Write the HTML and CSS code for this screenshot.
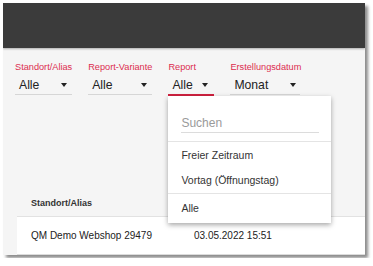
FILE: index.html
```html
<!DOCTYPE html>
<html lang="de">
<head>
    <meta charset="UTF-8" />
    <title>Reports</title>
    <link rel="stylesheet" href="styles.css">
</head>
<body>
    <div class="window">
        <header class="topbar"></header>

        <div class="filters">
            <div class="filter">
                <div class="filter-label">Standort/Alias</div>
                <div class="select select-standort"><span>Alle</span><i class="caret"></i></div>
            </div>
            <div class="filter">
                <div class="filter-label">Report-Variante</div>
                <div class="select select-variante"><span>Alle</span><i class="caret"></i></div>
            </div>
            <div class="filter open">
                <div class="filter-label">Report</div>
                <div class="select select-report"><span>Alle</span><i class="caret"></i></div>
                <div class="menu">
                    <div class="menu-search">
                        <input type="text" placeholder="Suchen" />
                    </div>
                    <div class="menu-item">Freier Zeitraum</div>
                    <div class="menu-item">Vortag (Öffnungstag)</div>
                    <div class="menu-item menu-item-sep">Alle</div>
                </div>
            </div>
            <div class="filter">
                <div class="filter-label">Erstellungsdatum</div>
                <div class="select select-datum"><span>Monat</span><i class="caret"></i></div>
            </div>
        </div>

        <div class="table">
            <div class="table-head">
                <div>Standort/Alias</div>
                <div></div>
            </div>
            <div class="table-row">
                <div>QM Demo Webshop 29479</div>
                <div>03.05.2022 15:51</div>
            </div>
        </div>
    </div>
</body>
</html>
```

FILE: styles.css
```css
body {
    margin: 0;
    padding: 3px;
    background: #fff;
    font-family: "Liberation Sans", Arial, sans-serif;
}
.window {
    width: 362px;
    height: 252px;
    background: #f5f5f5;
    overflow: hidden;
    box-shadow: 3px 3px 3px rgba(0,0,0,0.45);
}
.topbar {
    height: 45px;
    background: #3b3b3b;
    box-shadow: 0 1px 2px rgba(0,0,0,0.3);
}
.filters {
    display: flex;
    gap: 16px;
    padding: 13px 0 0 12px;
}
.filter {
    position: relative;
}
.filter-label {
    font-size: 9.2px;
    line-height: 12px;
    color: #dc2d4f;
    white-space: nowrap;
}
.select {
    display: flex;
    justify-content: space-between;
    align-items: center;
    height: 20px;
    padding: 1px 5px 0 4px;
    border-bottom: 1px solid #d6d6d6;
    font-size: 12.2px;
    color: #222;
    box-sizing: border-box;
    margin-top: 2px;
}
.select-standort { width: 57px; }
.select-variante { width: 64px; }
.select-report {
    width: 46px;
    border-bottom: 2px solid #d0213f;
    height: 21px;
    padding-right: 6px;
}
.select-datum { width: 70px; padding-right: 4px; }
.caret {
    width: 0;
    height: 0;
    border-left: 3.5px solid transparent;
    border-right: 3.5px solid transparent;
    border-top: 4px solid #222;
}
.menu {
    position: absolute;
    top: 35px;
    left: 0;
    width: 163px;
    height: 127px;
    box-sizing: border-box;
    background: #fff;
    box-shadow: 0 2px 5px rgba(0,0,0,0.35);
    z-index: 10;
}
.menu-search {
    padding: 18px 12px 8px 13px;
    border-bottom: 1px solid #e4e4e4;
}
.menu-search input {
    display: block;
    width: 100%;
    height: 19px;
    box-sizing: border-box;
    border: none;
    border-bottom: 1px solid #dcdcdc;
    padding: 0;
    font-family: inherit;
    font-size: 12px;
    outline: none;
}
.menu-search input::placeholder {
    color: #9a9a9a;
}
.menu-item {
    height: 24px;
    line-height: 24px;
    padding: 1px 0 0 13px;
    font-size: 10.5px;
    color: #333;
}
.menu-item-sep {
    border-top: 1px solid #e4e4e4;
    margin-top: 1px;
    padding-top: 2px;
}
.table {
    margin: 95px 0 0 14px;
}
.table-head, .table-row {
    display: grid;
    grid-template-columns: 163px 1fr;
    padding-left: 14px;
}
.table-head {
    height: 25px;
    line-height: 25px;
    font-size: 9px;
    font-weight: bold;
    color: #333;
    border-bottom: 1px solid #e2e2e2;
}
.table-row {
    height: 37px;
    line-height: 37px;
    background: #fff;
    font-size: 10px;
    color: #222;
    border-bottom: 1px solid #dcdcdc;
}
```
